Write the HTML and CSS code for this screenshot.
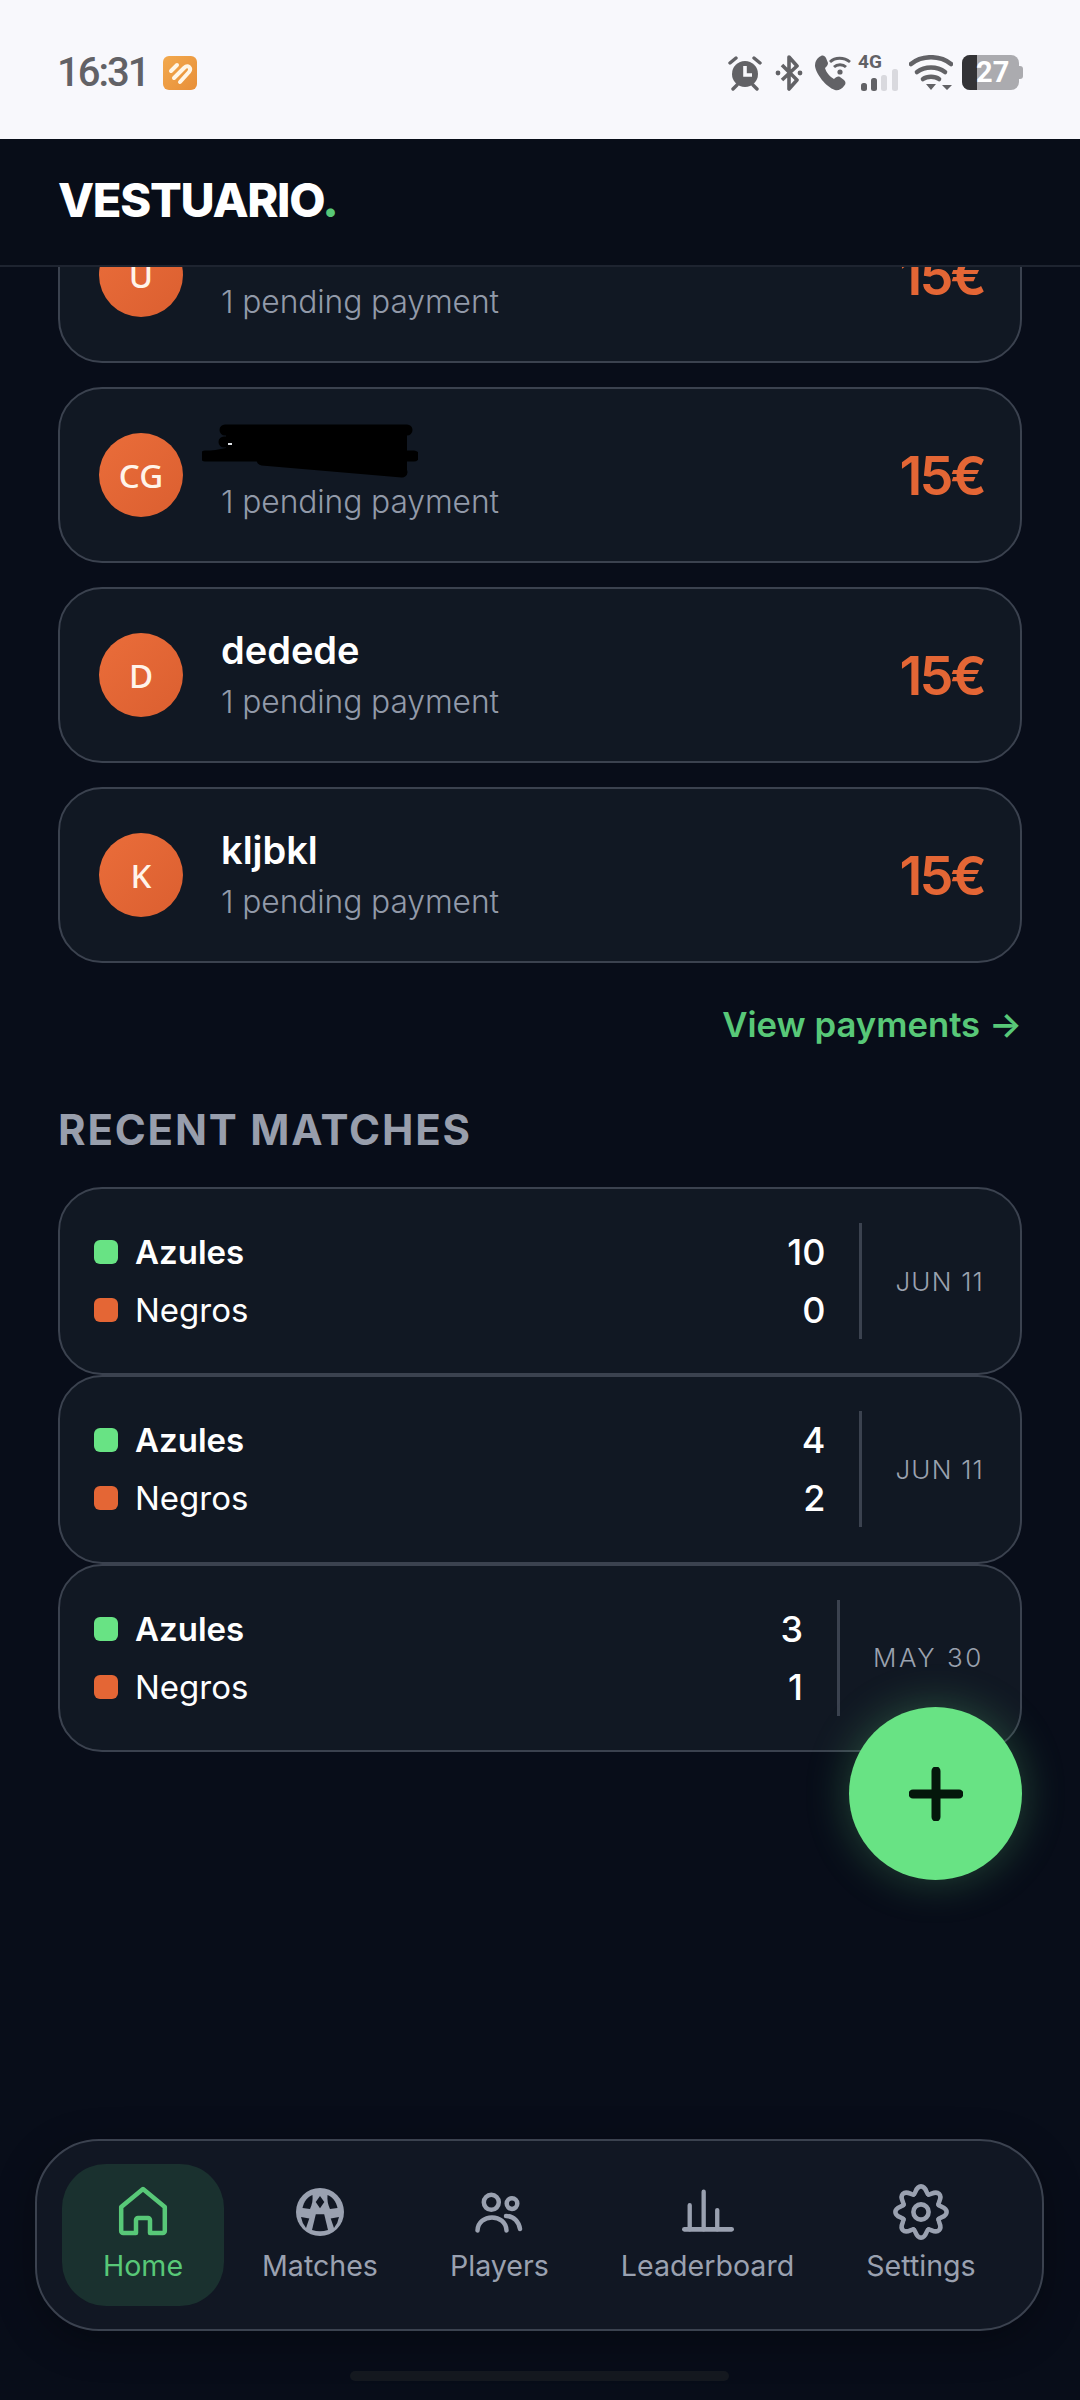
FILE: index.html
```html
<!DOCTYPE html>
<html lang="en">
<head>
<meta charset="utf-8">
<title>Vestuario</title>
<link rel="stylesheet" href="styles.css">
</head>
<body>
<div class="phone">
  <div class="statusbar">
    <div class="status-left">
      <span class="clock">16:31</span>
      <svg class="appicon" viewBox="0 0 34 34"><defs><linearGradient id="appg" x1="0" y1="0" x2="1" y2="1"><stop offset="0" stop-color="#f2a94e"/><stop offset="1" stop-color="#e88f38"/></linearGradient></defs><rect width="34" height="34" rx="6" fill="url(#appg)"/><path d="M8 15 14 9M11 22 21 12C25 8 29 12 26 16L17 26" stroke="#fff6e6" stroke-width="4" stroke-linecap="round" stroke-linejoin="round" fill="none"/></svg>
    </div>
    <div class="status-right">
      <svg class="si si-alarm" viewBox="0 0 36 36"><circle cx="18" cy="19" r="13" fill="#626266"/><path d="M18 11v9h7" stroke="#f8f8fc" stroke-width="3.6" fill="none"/><path d="M3 8l6-5M33 8l-6-5M6 34l4-4M30 34l-4-4" stroke="#626266" stroke-width="3.4" stroke-linecap="round"/></svg>
      <svg class="si si-bt" viewBox="0 0 28 36"><path d="M7 10l15 15-8 9V2l8 9L7 25" stroke="#626266" stroke-width="3.6" fill="none" stroke-linejoin="round"/><circle cx="3" cy="18" r="2.4" fill="#626266"/><circle cx="25" cy="18" r="2.4" fill="#626266"/></svg>
      <svg class="si si-call" viewBox="0 0 38 36"><path d="M7 1c2-1 4 0 5 2l2 5c0 2-1 3-3 5 1 4 5 9 9 11 2-2 4-3 6-2l4 3c2 2 2 4 0 6-2 3-6 5-9 4C12 32 2 19 1 11 1 6 3 3 7 1z" fill="#626266"/><path d="M16 7c5-5 14-5 20 0M20 12c3-3 9-3 12 0" stroke="#626266" stroke-width="2.8" fill="none"/><circle cx="26" cy="17" r="2.6" fill="#626266"/></svg>
      <div class="si-signal">
        <span class="net">4G</span>
        <svg class="bars" viewBox="0 0 40 22"><rect x="1" y="14" width="6" height="8" rx="2.5" fill="#626266"/><rect x="11" y="9" width="6" height="13" rx="2.5" fill="#626266"/><rect x="21" y="6" width="6" height="16" rx="2.5" fill="#d9d9de"/><rect x="32" y="0" width="6" height="22" rx="2.5" fill="#d9d9de"/></svg>
      </div>
      <svg class="si si-wifi" viewBox="0 0 44 36"><path d="M2 9c11-9 29-9 40 0" stroke="#626266" stroke-width="4.6" fill="none" stroke-linecap="round"/><path d="M8 17c8-6 20-6 28 0" stroke="#626266" stroke-width="4.6" fill="none" stroke-linecap="round"/><path d="M14 24c4-3 12-3 16 0" stroke="#626266" stroke-width="4.6" fill="none" stroke-linecap="round"/><path d="M17 29h10l-5 6zM33 30h10l-5 5z" fill="#626266"/></svg>
      <div class="battery"><span class="battery-fill"></span><span class="battery-num">27</span><span class="battery-cap"></span></div>
    </div>
  </div>

  <header class="appbar">
    <div class="logo">VESTUARIO<span class="logo-dot">.</span></div>
  </header>

  <main class="scroller">
    <div class="scroll-inner">
      <section class="debts">
        <article class="debt">
          <div class="avatar">U</div>
          <div class="debt-info"><div class="debt-name"></div><div class="debt-sub">1 pending payment</div></div>
          <div class="amount">15€</div>
        </article>
        <article class="debt">
          <div class="avatar">CG</div>
          <div class="debt-info">
            <div class="debt-name debt-name-hidden">
              <svg class="scribble" viewBox="0 0 216 54"><path d="M23 6H205M22 18H190M3 32H212M60 36L200 48" stroke="#000" stroke-width="11" stroke-linecap="round" fill="none"/><path d="M24 6H205V46L60 36H3V28L24 24z" fill="#000"/><path d="M26 20h4" stroke="#dfe3e8" stroke-width="2"/></svg>
            </div>
            <div class="debt-sub">1 pending payment</div>
          </div>
          <div class="amount">15€</div>
        </article>
        <article class="debt">
          <div class="avatar">D</div>
          <div class="debt-info"><div class="debt-name">dedede</div><div class="debt-sub">1 pending payment</div></div>
          <div class="amount">15€</div>
        </article>
        <article class="debt">
          <div class="avatar">K</div>
          <div class="debt-info"><div class="debt-name">kljbkl</div><div class="debt-sub">1 pending payment</div></div>
          <div class="amount">15€</div>
        </article>
      </section>

      <a class="view-link">View payments →</a>

      <h2 class="section-title">RECENT MATCHES</h2>

      <section class="matches">
        <article class="match">
          <div class="teams">
            <div class="team team-win"><span class="dot dot-green"></span><span class="team-name">Azules</span><span class="score">10</span></div>
            <div class="team"><span class="dot dot-orange"></span><span class="team-name">Negros</span><span class="score">0</span></div>
          </div>
          <div class="match-date">JUN 11</div>
        </article>
        <article class="match">
          <div class="teams">
            <div class="team team-win"><span class="dot dot-green"></span><span class="team-name">Azules</span><span class="score">4</span></div>
            <div class="team"><span class="dot dot-orange"></span><span class="team-name">Negros</span><span class="score">2</span></div>
          </div>
          <div class="match-date">JUN 11</div>
        </article>
        <article class="match">
          <div class="teams">
            <div class="team team-win"><span class="dot dot-green"></span><span class="team-name">Azules</span><span class="score">3</span></div>
            <div class="team"><span class="dot dot-orange"></span><span class="team-name">Negros</span><span class="score">1</span></div>
          </div>
          <div class="match-date match-date-wide">MAY 30</div>
        </article>
      </section>
    </div>
  </main>

  <button class="fab" aria-label="Add">
    <svg viewBox="0 0 54 54" class="fab-icon"><path d="M27 4v46M4 27h46" stroke="#04170b" stroke-width="9" stroke-linecap="round"/></svg>
  </button>

  <nav class="tabbar">
    <a class="tab tab-active">
      <svg class="tab-icon" viewBox="0 0 52 52" fill="none" stroke="currentColor" stroke-width="4.5" stroke-linejoin="round"><path d="M4.2 21 26 3l21.8 18v24a2 2 0 0 1-2 2H33V34a2 2 0 0 0-2-2H21a2 2 0 0 0-2 2v13H6.2a2 2 0 0 1-2-2z"/></svg>
      <span class="tab-label">Home</span>
    </a>
    <a class="tab tab-first">
      <svg class="tab-icon" viewBox="0 0 52 52"><circle cx="26" cy="26" r="24" fill="currentColor"/><g fill="#111723"><path d="M26 10l4.3 6L26 22.3 21.7 16z"/><path d="M21.8 28.3h8.4L34 44q-8 2.5-16 0z"/><path d="M18.5 9C14 10.5 10 15 8.5 22L16 23C18 19 19 14 18.5 9z"/><path d="M33.5 9C38 10.5 42 15 43.5 22L36 23C34 19 33 14 33.5 9z"/><path d="M7 31l8.3 1.5-3.3 9.5q-4-5-5-11z"/><path d="M45 31l-8.3 1.5 3.3 9.5q4-5 5-11z"/></g></svg>
      <span class="tab-label">Matches</span>
    </a>
    <a class="tab">
      <svg class="tab-icon" viewBox="0 0 52 52" fill="none" stroke="currentColor" stroke-width="4.5" stroke-linecap="round"><circle cx="18.3" cy="16.3" r="7.5"/><circle cx="39" cy="17.6" r="5.3"/><path d="M4.5 44.5C5 27 33 27 33.5 44.5M33 30C41 30 46 36 47 43"/></svg>
      <span class="tab-label">Players</span>
    </a>
    <a class="tab">
      <svg class="tab-icon" viewBox="0 0 54 52" fill="none" stroke="currentColor" stroke-linecap="round"><path d="M2.5 44h49" stroke-width="5"/><path d="M8 19v25M22.5 5v39M36.6 24v20" stroke-width="4.5"/></svg>
      <span class="tab-label">Leaderboard</span>
    </a>
    <a class="tab">
      <svg class="tab-icon tab-icon-gear" viewBox="0 0 56 56" fill="none" stroke="currentColor" stroke-width="4.6" stroke-linecap="round" stroke-linejoin="round">
        <defs><path id="gear-tooth" d="M20.7 10.5C23 9.5 22.5 2.4 28 2.4S33 9.5 35.3 10.5"/></defs>
        <circle cx="28" cy="28" r="7.6"/>
        <use href="#gear-tooth"/>
        <use href="#gear-tooth" transform="rotate(45 28 28)"/>
        <use href="#gear-tooth" transform="rotate(90 28 28)"/>
        <use href="#gear-tooth" transform="rotate(135 28 28)"/>
        <use href="#gear-tooth" transform="rotate(180 28 28)"/>
        <use href="#gear-tooth" transform="rotate(225 28 28)"/>
        <use href="#gear-tooth" transform="rotate(270 28 28)"/>
        <use href="#gear-tooth" transform="rotate(315 28 28)"/>
      </svg>
      <span class="tab-label">Settings</span>
    </a>
  </nav>

  <div class="homebar"></div>
</div>
</body>
</html>
```
FILE: styles.css
```css
* { box-sizing: border-box; }
html, body { margin: 0; padding: 0; background: #080d19; }
body { font-family: "Inter", "Noto Sans", sans-serif; color: #fff; }
a { text-decoration: none; }

.phone { position: relative; width: 1080px; height: 2400px; overflow: hidden; display: flex; flex-direction: column; background: #080d19; }

/* status bar */
.statusbar { height: 139px; flex: none; background: #f8f8fc; display: flex; align-items: flex-start; justify-content: space-between; padding: 55px 61px 0 57px; }
.status-left { display: flex; align-items: center; gap: 15px; height: 36px; }
.clock { font-family: "Roboto", sans-serif; font-weight: 500; font-size: 40px; letter-spacing: -2px; color: #626266; line-height: 36px; }
.appicon { width: 34px; height: 34px; }
.status-right { display: flex; align-items: flex-start; height: 36px; }
.si { height: 36px; flex: none; }
.si-alarm { width: 36px; }
.si-bt { width: 28px; margin-left: 12px; }
.si-call { width: 38px; margin-left: 11px; }
.si-signal { position: relative; width: 42px; height: 36px; margin-left: 6px; flex: none; }
.net { position: absolute; left: 0; top: -3px; font-family: "Roboto", sans-serif; font-weight: 700; font-size: 19px; line-height: 20px; color: #626266; }
.bars { position: absolute; left: 2px; bottom: 0; width: 40px; height: 22px; }
.si-wifi { width: 44px; margin-left: 9px; }
.battery { position: relative; width: 57px; height: 35px; margin-left: 9px; border-radius: 8px; background: #ababaf; flex: none; }
.battery-fill { position: absolute; left: 0; top: 0; bottom: 0; width: 15px; background: #333336; border-radius: 8px 0 0 8px; }
.battery-num { position: absolute; left: 14px; top: 0; font-family: "Roboto", sans-serif; font-weight: 700; font-size: 29px; line-height: 35px; color: #fff; }
.battery-cap { position: absolute; right: -4px; top: 11px; width: 4px; height: 13px; background: #ababaf; border-radius: 0 3px 3px 0; }

/* header */
.appbar { height: 128px; flex: none; background: #080d18; border-bottom: 2px solid #1e2430; display: flex; align-items: center; padding: 0 0 5px 58px; position: relative; z-index: 2; }
.logo { font-size: 47px; font-weight: 800; letter-spacing: -1.3px; color: #fff; line-height: 1; }
.logo-dot { color: #58c878; }

/* scrolling content */
.scroller { flex: 1; overflow: hidden; }
.scroll-inner { margin-top: -80px; padding: 0 58px; }
.debts { display: flex; flex-direction: column; gap: 24px; }
.debt { height: 176px; display: flex; align-items: center; padding: 0 36px 0 39px; background: #111823; border: 2px solid #3b424f; border-radius: 44px; }
.avatar { width: 84px; height: 84px; flex: none; border-radius: 50%; background: linear-gradient(135deg, #ea6d3a, #db5f30); color: #fff4ea; display: flex; align-items: center; justify-content: center; font-family: "Noto Sans", sans-serif; font-size: 33px; font-weight: 500; }
.debt-info { flex: 1; margin: 2px 0 0 38px; min-width: 0; }
.debt-name { font-size: 38px; font-weight: 600; line-height: 50px; height: 50px; color: #fff; }
.debt-name-hidden { position: relative; }
.scribble { position: absolute; left: -19px; top: -1px; width: 216px; height: 54px; }
.debt-sub { margin-top: 2px; font-size: 31.8px; font-weight: 300; line-height: 50px; letter-spacing: -0.1px; color: #929aa9; }
.amount { font-size: 54px; font-weight: 600; letter-spacing: -3px; color: #e46635; }

.view-link { display: block; margin-top: 37px; text-align: right; font-size: 34.7px; font-weight: 600; line-height: 48px; color: #58c878; }

.section-title { margin: 57px 0 32px; font-size: 42px; font-weight: 700; letter-spacing: 1.8px; line-height: 50px; color: #989eac; }

.matches { display: flex; flex-direction: column; gap: 0; }
.match { height: 188.33px; display: flex; align-items: center; padding: 0 36px 0 34px; background: #111823; border: 2px solid #3b424f; border-radius: 44px; }
.teams { flex: 1; display: flex; flex-direction: column; gap: 8px; padding-right: 34px; border-right: 3px solid #3b424f; height: 116px; justify-content: center; }
.team { display: flex; align-items: center; height: 50px; }
.dot { width: 24px; height: 24px; border-radius: 6px; flex: none; }
.dot-green { background: #68e384; }
.dot-orange { background: #e46635; }
.team-name { flex: 1; margin-left: 17px; font-size: 33px; font-weight: 400; color: #fff; }
.team-win .team-name { font-weight: 600; }
.score { font-size: 36px; font-weight: 500; color: #fff; }
.match-date { margin-left: 33px; font-size: 26px; font-weight: 300; letter-spacing: 1.2px; color: #9aa1ae; white-space: nowrap; }
.match-date-wide { letter-spacing: 2.6px; }

/* floating button */
.fab { position: absolute; left: 849px; top: 1707px; width: 173px; height: 173px; padding: 0; border: none; border-radius: 50%; background: #68e384; box-shadow: 0 0 44px rgba(104, 227, 132, 0.28); display: flex; align-items: center; justify-content: center; }
.fab-icon { width: 54px; height: 54px; }

/* tab bar */
.tabbar { position: absolute; left: 35px; top: 2139px; width: 1009px; height: 192px; display: flex; align-items: center; padding: 0 25px; background: #111723; border: 2px solid #3b424f; border-radius: 64px; box-shadow: 0 10px 40px rgba(0, 0, 0, 0.3); }
.tab { flex: none; display: flex; flex-direction: column; align-items: center; padding: 22px 36px 0; color: #9aa1b0; height: 142px; }
.tab-first { margin-left: 2px; }
.tab-active { width: 162px; padding-left: 0; padding-right: 0; background: #1a312f; border-radius: 44px; color: #58c878; }
.tab-icon { width: 52px; height: 52px; flex: none; }
.tab-icon-gear { width: 56px; height: 56px; margin: -2px 0; }
.tab-label { margin-top: 10px; font-size: 28.6px; font-weight: 400; line-height: 36px; white-space: nowrap; }

.homebar { position: absolute; left: 350px; top: 2371px; width: 379px; height: 10px; border-radius: 5px; background: #14181f; }
```
